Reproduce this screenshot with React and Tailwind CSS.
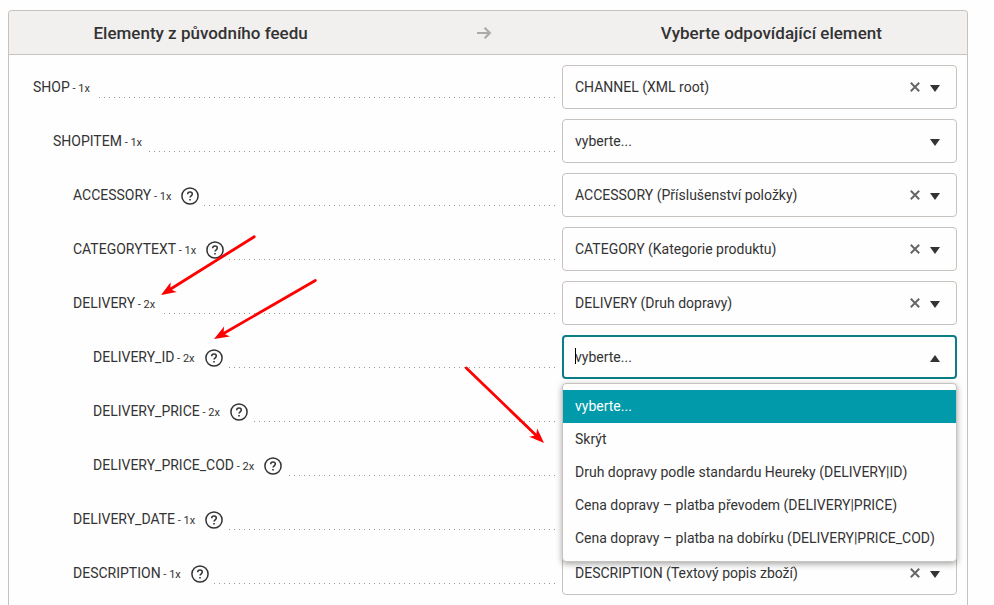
import React, { useState } from 'react';

const rows = [
  { id: 'shop', name: 'SHOP', count: 1, level: 0, value: 'CHANNEL (XML root)' },
  { id: 'shopitem', name: 'SHOPITEM', count: 1, level: 1, value: '' },
  { id: 'accessory', name: 'ACCESSORY', count: 1, level: 2, help: true, value: 'ACCESSORY (Příslušenství položky)' },
  { id: 'categorytext', name: 'CATEGORYTEXT', count: 1, level: 2, help: true, value: 'CATEGORY (Kategorie produktu)' },
  { id: 'delivery', name: 'DELIVERY', count: 2, level: 2, value: 'DELIVERY (Druh dopravy)' },
  { id: 'delivery_id', name: 'DELIVERY_ID', count: 2, level: 3, help: true, value: '', open: true },
  { id: 'delivery_price', name: 'DELIVERY_PRICE', count: 2, level: 3, help: true, value: '' },
  { id: 'delivery_price_cod', name: 'DELIVERY_PRICE_COD', count: 2, level: 3, help: true, value: '' },
  { id: 'delivery_date', name: 'DELIVERY_DATE', count: 1, level: 2, help: true, value: '' },
  { id: 'description', name: 'DESCRIPTION', count: 1, level: 2, help: true, value: 'DESCRIPTION (Textový popis zboží)' },
];

const deliveryOptions = [
  'vyberte...',
  'Skrýt',
  'Druh dopravy podle standardu Heureky (DELIVERY|ID)',
  'Cena dopravy – platba převodem (DELIVERY|PRICE)',
  'Cena dopravy – platba na dobírku (DELIVERY|PRICE_COD)',
];

const indent = ['pl-0', 'pl-5', 'pl-10', 'pl-[60px]'];

function HelpIcon() {
  return (
    <svg viewBox="0 0 18 18" className="block size-[18px]" fill="none" stroke="#333" aria-hidden="true">
      <circle cx="9" cy="9" r="8.1" strokeWidth="1.5" />
      <path d="M6.7 7.2C6.7 5.8 7.6 5 9 5s2.3.8 2.3 2.1c0 1.6-2.3 1.8-2.3 3.5" strokeWidth="1.5" />
      <path d="M9 12v1.6" strokeWidth="1.6" />
    </svg>
  );
}

function Triangle({ up }) {
  return (
    <svg viewBox="0 0 10 7" className="block h-[7px] w-[10px]" fill="#333" aria-hidden="true">
      <path d={up ? 'M0 7h10L5 0z' : 'M0 0h10L5 7z'} />
    </svg>
  );
}

function MappingSelect({ row }) {
  const [value, setValue] = useState(row.value);

  return (
    <div className="relative">
      <select
        id={row.id}
        value={value}
        onChange={(e) => setValue(e.target.value)}
        className="block h-11 w-full appearance-none rounded border border-[#c8c2be] bg-[#fefefe] pr-14 pl-3 text-[#333]"
      >
        <option value="">vyberte...</option>
        {row.value && <option value={row.value}>{row.value}</option>}
      </select>
      {value && (
        <button
          type="button"
          aria-label="Zrušit výběr"
          onClick={() => setValue('')}
          className="absolute top-4 right-9 p-px"
        >
          <svg viewBox="0 0 10 10" className="block size-[10px]" stroke="#666" strokeWidth="2" aria-hidden="true">
            <path d="M.8.8l8.4 8.4M9.2.8L.8 9.2" />
          </svg>
        </button>
      )}
      <span className="pointer-events-none absolute top-5 right-[17px]">
        <Triangle />
      </span>
    </div>
  );
}

function OpenSelect({ row }) {
  const [active, setActive] = useState(0);
  const [query, setQuery] = useState('');

  return (
    <div className="relative">
      <input
        id={row.id}
        type="text"
        role="combobox"
        aria-expanded="true"
        aria-controls={`${row.id}-list`}
        autoComplete="off"
        value={query}
        onChange={(e) => setQuery(e.target.value)}
        placeholder="vyberte..."
        className="block h-11 w-full rounded border-2 border-[#0b7d86] bg-[#fefefe] pr-9 pl-[11px] outline-none placeholder:text-[#333]"
      />
      <span className="pointer-events-none absolute top-[13px] left-[13px] h-4 w-px bg-black" />
      <span className="pointer-events-none absolute top-5 right-[17px]">
        <Triangle up />
      </span>
      <ul
        id={`${row.id}-list`}
        role="listbox"
        className="absolute inset-x-0 top-12 z-10 rounded border border-[#c8c2be] bg-[#fefefe] py-1.5 shadow-[0_2px_6px_rgba(0,0,0,0.35)]"
      >
        {deliveryOptions.map((option, i) => (
          <li
            key={option}
            role="option"
            aria-selected={i === active}
            onMouseEnter={() => setActive(i)}
            className={`h-[33px] truncate px-3 leading-[33px] ${i === active ? 'bg-[#009aaa] text-white' : ''}`}
          >
            {option}
          </li>
        ))}
      </ul>
    </div>
  );
}

function MappingRow({ row }) {
  return (
    <div className="grid grid-cols-[522fr_395fr] gap-[7px]">
      <div className="flex bg-[linear-gradient(to_left,#999_1px,transparent_1px)] bg-[length:5px_1px] bg-[position:right_32px] bg-repeat-x">
        <div className={`flex items-center bg-[#fefefe] pr-[3px] ${indent[row.level]}`}>
          <label htmlFor={row.id} className="pr-0.5 whitespace-nowrap">
            {row.name}
            <span className="text-[11px]"> - {row.count}x</span>
          </label>
          {row.help && (
            <button type="button" aria-label={`Nápověda: ${row.name}`} className="ml-2 pt-px">
              <HelpIcon />
            </button>
          )}
        </div>
      </div>
      {row.open ? <OpenSelect row={row} /> : <MappingSelect row={row} />}
    </div>
  );
}

// red pointers drawn over the table
function Annotations() {
  const pointers = [
    { x: 161, y: 295, angle: -32, length: 110 },
    { x: 214, y: 339, angle: -30, length: 117 },
    { x: 544, y: 443, angle: 224, length: 108 },
  ];

  return (
    <svg width="560" height="460" className="pointer-events-none absolute top-0 left-0 z-20" aria-hidden="true">
      {pointers.map((p) => (
        <g key={p.x} transform={`translate(${p.x} ${p.y}) rotate(${p.angle})`}>
          <path d={`M10 0H${p.length}`} stroke="#f00" strokeWidth="2.8" strokeLinecap="round" />
          <path d="M0 0L15-5.8 11 0 15 5.8z" fill="#f00" />
        </g>
      ))}
    </svg>
  );
}

function App() {
  return (
    <div className="relative flex h-screen flex-col overflow-hidden bg-[#fefefe] pt-2.5 pr-[26px] pl-2 font-['Roboto',sans-serif] text-sm text-[#333]">
      <div className="flex-1 rounded-t border border-b-0 border-[#c8c2be]">
        <div className="flex h-11 items-center rounded-t border-b border-[#c8c2be] bg-[#f2f0ef] pt-0.5 text-[17px] font-medium">
          <h2 className="w-2/5 text-center">Elementy z původního feedu</h2>
          <div className="flex w-1/5 justify-center pr-1.5 pb-0.5">
            <svg viewBox="0 0 15 12" className="block h-3 w-[15px]" fill="none" stroke="#aaa" strokeWidth="2.2" aria-hidden="true">
              <path d="M0 6h13M7.6.8L12.8 6l-5.2 5.2" />
            </svg>
          </div>
          <h2 className="w-2/5 pr-2 text-center">Vyberte odpovídající element</h2>
        </div>
        <form className="flex flex-col gap-2.5 pt-2.5 pr-2.5 pl-6">
          {rows.map((row) => (
            <MappingRow key={row.id} row={row} />
          ))}
        </form>
      </div>
      <Annotations />
    </div>
  );
}

export default App;
